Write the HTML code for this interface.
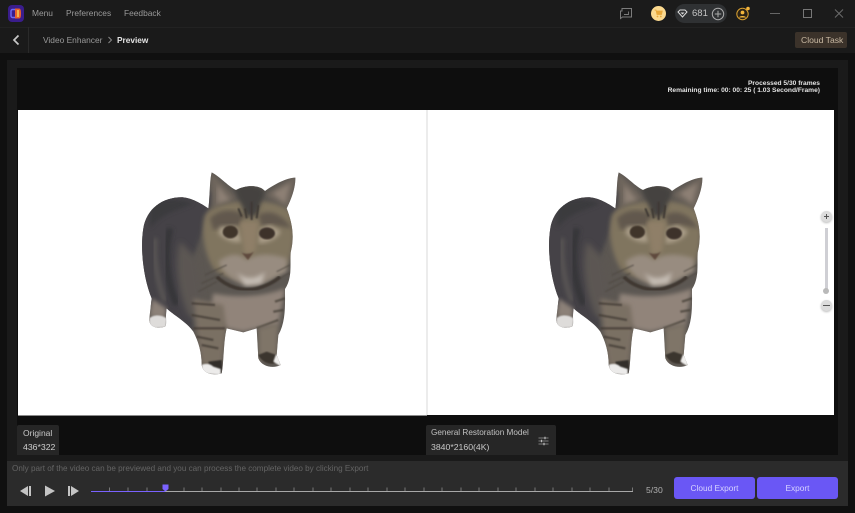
<!DOCTYPE html>
<html><head><meta charset="utf-8"><style>
*{box-sizing:border-box}
html,body{margin:0;padding:0;width:855px;height:513px;overflow:hidden;background:#101010;font-family:"Liberation Sans",sans-serif}
.a{position:absolute}
.t{position:absolute;white-space:nowrap;line-height:12px}
</style></head><body>
<svg width="0" height="0" style="position:absolute"><defs>
<filter id="b" x="-5%" y="-5%" width="110%" height="110%"><feGaussianBlur stdDeviation="2"/></filter>
<filter id="b2" x="-20%" y="-20%" width="140%" height="140%"><feGaussianBlur stdDeviation="9"/></filter>
<filter id="b3" x="-10%" y="-10%" width="120%" height="120%"><feGaussianBlur stdDeviation="6"/></filter>
<clipPath id="cc"><path d="M245,22C270,35 300,68 318,75C350,58 390,60 405,78C430,60 470,38 496,38C497,70 482,105 470,130C485,170 495,210 482,262C480,300 487,340 465,372C465,420 468,470 445,510L440,570L452,600C430,612 395,605 385,580L380,490L340,502L290,490C280,530 282,590 275,625C250,632 220,628 215,600C215,560 205,530 190,500C170,470 130,450 110,430C105,455 112,480 105,485C85,492 55,488 58,460L65,400C40,340 30,250 40,190C50,130 100,95 160,97C190,100 220,120 235,130C240,100 238,50 245,22Z"/></clipPath>
<symbol id="cat" viewBox="0 0 540 645" overflow="visible">
<g clip-path="url(#cc)">
<rect width="540" height="645" fill="#5c5752"/>
<path d="M20,80H250L225,180L180,300L190,500L110,450L20,400Z" fill="#444347" filter="url(#b3)"/>
<path d="M150,230C130,300 150,400 175,450L230,480L200,280Z" fill="#5c5752" filter="url(#b2)"/>
<path d="M75,220C70,290 85,360 105,410" stroke="#5a5755" stroke-width="14" fill="none" filter="url(#b3)"/>
<path d="M120,190C100,270 110,350 140,420" stroke="#363539" stroke-width="20" fill="none" filter="url(#b3)"/>
<path d="M60,110C90,100 150,100 190,115C150,135 100,140 60,190Z" fill="#3a3a3e" filter="url(#b3)"/>
<path d="M240,20L320,100L250,130Z" fill="#6f665d" filter="url(#b3)"/>
<path d="M405,90L500,30L480,135Z" fill="#6f665d" filter="url(#b3)"/>
<path d="M262,60L300,105L262,115Z" fill="#8d8075" filter="url(#b3)"/>
<path d="M428,85L480,55L465,115Z" fill="#8d8075" filter="url(#b3)"/>
<path d="M225,150C260,100 430,90 480,140C500,200 490,270 465,310C420,350 300,360 250,310C225,270 210,200 225,150Z" fill="#80745f" filter="url(#b3)"/>
<path d="M310,68C345,55 390,60 405,80L380,150L350,155L330,110Z" fill="#45423f" filter="url(#b3)"/>
<path d="M240,160C270,130 310,130 345,150L330,180L250,195ZM385,150C420,130 460,150 485,190L430,180L395,185Z" fill="#62584d" filter="url(#b3)"/>
<path d="M265,205C285,228 320,235 335,230L320,185L270,185ZM385,235C410,235 445,222 452,198L420,180L390,190Z" fill="#aa9e89" filter="url(#b3)"/>
<path d="M330,170L385,170L375,260L345,270Z" fill="#8f7f68" filter="url(#b3)"/>
<path d="M265,290C300,262 330,265 350,285C380,265 420,265 470,280L470,320C420,345 390,370 350,360C320,355 280,330 265,290Z" fill="#988c80" filter="url(#b3)"/>
<path d="M320,320C340,345 380,345 405,320L395,355L345,362Z" fill="#c4bcb3" filter="url(#b3)"/>
<path d="M260,335C290,365 340,380 375,372C405,365 435,350 450,335" stroke="#403931" stroke-width="11" fill="none" filter="url(#b)"/>
<path d="M250,385C320,400 400,395 465,370L445,480L380,490L340,500L290,490L240,440Z" fill="#91847a" filter="url(#b3)"/>
<path d="M190,400L280,420L290,490L275,600L215,600L205,530Z" fill="#7a6f64" filter="url(#b3)"/>
<path d="M185,415L255,420M185,450L270,465M190,490L285,490M200,515L250,525M215,540L265,550" stroke="#3f3933" stroke-width="7" fill="none" filter="url(#b)" opacity=".7"/>
<path d="M380,490L445,465M435,410L465,400M430,440L460,435" stroke="#433d36" stroke-width="7" fill="none" filter="url(#b)" opacity=".7"/>
<path d="M225,330L290,300M215,355L280,325M205,380L260,350M440,320L480,300M450,340L485,320" stroke="#4f4842" stroke-width="4" fill="none" filter="url(#b)" opacity=".7"/>
<path d="M345,130L350,160M365,110L365,165M385,120L380,160M325,130L335,155" stroke="#3c3733" stroke-width="6" fill="none" filter="url(#b)"/>
<path d="M385,490L445,475L440,590L385,585Z" fill="#7f7468" filter="url(#b3)"/>
<path d="M384,570C395,590 415,600 435,595L440,570L410,560Z" fill="#3b352f" filter="url(#b)"/>
<path d="M430,590L438,568L452,575L452,604Z" fill="#f0efed" filter="url(#b)"/>
<path d="M235,590L275,585L278,625L240,615Z" fill="#332e2a" filter="url(#b)"/>
<path d="M215,600C225,595 240,595 250,605L272,612L272,630L218,625Z" fill="#ecebea" filter="url(#b)"/>
<path d="M65,400L110,430L105,460L60,455Z" fill="#8c8178" filter="url(#b3)"/>
<path d="M58,460C70,448 95,448 110,460L108,487L58,490Z" fill="#dedcda" filter="url(#b)"/>
</g>
<ellipse cx="301" cy="201" rx="23" ry="19" fill="#40362b" filter="url(#b)"/>
<ellipse cx="411" cy="205" rx="24" ry="18" fill="#3d312a" filter="url(#b)"/>
<path d="M334,262C345,268 362,268 372,260L354,285Z" fill="#5f4a3e" filter="url(#b)"/>
</symbol>
</defs></svg>

<!-- top bars -->
<div class="a" style="left:0;top:0;width:855px;height:27px;background:#1b1b1b"></div>
<div class="a" style="left:0;top:27px;width:855px;height:26px;background:#1a1a1a;border-top:1px solid #222"></div>
<div class="a" style="left:28px;top:27px;width:1px;height:26px;background:#2a2a2a"></div>

<!-- logo -->
<svg class="a" style="left:8px;top:5px" width="16" height="17" viewBox="0 0 16 17">
<rect width="16" height="17" rx="4" fill="#3a1d8c"/>
<rect x="3" y="4.5" width="7" height="8" rx="1.5" fill="none" stroke="#6d6cf5" stroke-width="1.4"/>
<path d="M7,3.5H11C12.5,3.5 13,5 13,8.5C13,12 12.5,13.5 11,13.5H7Z" fill="#e8602c"/>
<rect x="9" y="5" width="2" height="7" fill="#f2b34a"/>
</svg>
<div class="t" style="left:32px;top:7px;font-size:8.4px;color:#9a9a9a">Menu</div>
<div class="t" style="left:66px;top:7px;font-size:8.4px;color:#9a9a9a">Preferences</div>
<div class="t" style="left:124px;top:7px;font-size:8.4px;color:#9a9a9a">Feedback</div>

<svg class="a" style="left:11px;top:33px" width="10" height="14" viewBox="0 0 10 14"><path d="M7.5,2.5L3,7L7.5,11.5" fill="none" stroke="#c8c8c8" stroke-width="1.7"/></svg>
<div class="t" style="left:43px;top:34px;font-size:8.4px;color:#9a9a9a">Video Enhancer</div>
<svg class="a" style="left:107px;top:36px" width="6" height="8" viewBox="0 0 6 8"><path d="M1.5,1L4.5,4L1.5,7" fill="none" stroke="#8a8a8a" stroke-width="1"/></svg>
<div class="t" style="left:117px;top:34px;font-size:8.3px;font-weight:bold;color:#e4e4e4">Preview</div>

<!-- top right icons -->
<svg class="a" style="left:619px;top:7px" width="14" height="13" viewBox="0 0 14 13"><path d="M3,1.5H12.5V10H3.5L1.5,11.5V4H3Z" fill="none" stroke="#7c7c7c" stroke-width="1"/><path d="M5,7.5H9.5V4.5" stroke="#7c7c7c" stroke-width=".9" fill="none"/></svg>
<div class="a" style="left:651px;top:6px;width:15px;height:15px;border-radius:50%;background:#fbd98f"></div>
<svg class="a" style="left:654px;top:9px" width="9" height="9" viewBox="0 0 9 9"><path d="M.5,1H2L3,5.5H7.5L8.3,2H2.5" fill="#e8a83a" stroke="#e8a83a" stroke-width=".8"/><circle cx="3.5" cy="7.5" r=".9" fill="#e8a83a"/><circle cx="6.8" cy="7.5" r=".9" fill="#e8a83a"/></svg>
<div class="a" style="left:675px;top:4px;width:52px;height:19px;border-radius:10px;background:#2f3133"></div>
<svg class="a" style="left:677px;top:9px" width="11" height="9" viewBox="0 0 11 9"><path d="M1,3L3,1H8L10,3L5.5,8Z" fill="none" stroke="#ddd" stroke-width="1"/><path d="M3.5,3.5H7.5L5.5,5.5Z" fill="#ddd"/></svg>
<div class="t" style="left:692px;top:8px;font-size:9.5px;color:#c4c4c4">681</div>
<svg class="a" style="left:711px;top:7px" width="14" height="14" viewBox="0 0 14 14"><circle cx="7" cy="7" r="5.7" fill="none" stroke="#aaa" stroke-width="1"/><path d="M7,3.8V10.2M3.8,7H10.2" stroke="#aaa" stroke-width="1"/></svg>
<svg class="a" style="left:735px;top:6px" width="16" height="15" viewBox="0 0 16 15"><circle cx="7.5" cy="8" r="5.7" fill="#2a2216" stroke="#d9a030" stroke-width="1"/><circle cx="7.5" cy="6.5" r="1.9" fill="#f2b63c"/><path d="M4,11.5C4.5,9.5 10.5,9.5 11,11.5Z" fill="#f2b63c"/><circle cx="13" cy="2.5" r="1.8" fill="#f5b53c"/></svg>
<div class="a" style="left:770px;top:13px;width:10px;height:1px;background:#666"></div>
<div class="a" style="left:803px;top:9px;width:9px;height:9px;border:1px solid #777"></div>
<svg class="a" style="left:834px;top:8px" width="10" height="11" viewBox="0 0 10 11"><path d="M1,1.5L9,9.5M9,1.5L1,9.5" stroke="#6c6c6c" stroke-width="1" fill="none"/></svg>

<div class="a" style="left:795px;top:32px;width:52px;height:16px;background:#3b322a;border-radius:2px"></div>
<div class="t" style="left:801px;top:34px;font-size:8.6px;color:#c9b9a3">Cloud Task</div>

<!-- main panel -->
<div class="a" style="left:0;top:53px;width:855px;height:460px;background:#101010"></div>
<div class="a" style="left:7px;top:60px;width:841px;height:402px;background:#1a1a1a"></div>
<div class="a" style="left:17px;top:68px;width:821px;height:387px;background:#0e0e0e"></div>
<div class="t" style="right:35px;top:79.5px;font-size:6.65px;line-height:7px;color:#e2e2e2;text-align:right;font-weight:bold">Processed 5/30 frames<br>Remaining time: 00: 00: 25 ( 1.03 Second/Frame)</div>

<!-- images -->
<div class="a" style="left:18px;top:110px;width:816px;height:305px;background:#fff"></div>
<div class="a" style="left:426px;top:110px;width:2px;height:305px;background:#ececec"></div>
<div class="a" style="left:18px;top:415px;width:409px;height:1px;background:#8a8a8a"></div>
<svg class="a" style="left:130px;top:165px" width="180" height="215" viewBox="0 0 540 645"><use href="#cat" width="540" height="645"/></svg>
<svg class="a" style="left:537px;top:165px" width="180" height="215" viewBox="0 0 540 645"><use href="#cat" width="540" height="645"/></svg>

<!-- zoom slider -->
<div class="a" style="left:821px;top:211px;width:11px;height:11px;border-radius:50%;background:#dcdcdc;box-shadow:0 1px 2px #bbb"></div>
<svg class="a" style="left:821px;top:211px" width="11" height="11" viewBox="0 0 11 11"><path d="M5.5,3V8M3,5.5H8" stroke="#555" stroke-width="1"/></svg>
<div class="a" style="left:825px;top:228px;width:3px;height:63px;background:#cfcfd4"></div>
<div class="a" style="left:823px;top:288px;width:6px;height:6px;border-radius:50%;background:#b9b9b9"></div>
<div class="a" style="left:821px;top:300px;width:11px;height:11px;border-radius:50%;background:#dcdcdc;box-shadow:0 1px 2px #bbb"></div>
<div class="a" style="left:823px;top:305px;width:7px;height:1px;background:#555"></div>

<!-- labels -->
<div class="a" style="left:17px;top:425px;width:42px;height:30px;background:#262626;border-radius:2px 2px 0 0"></div>
<div class="t" style="left:23px;top:427px;font-size:8.5px;color:#c8c8c8">Original</div>
<div class="t" style="left:23px;top:441px;font-size:8.7px;color:#d0d0d0">436*322</div>
<div class="a" style="left:426px;top:425px;width:130px;height:30px;background:#262626;border-radius:2px 2px 0 0"></div>
<div class="t" style="left:431px;top:427px;font-size:8.2px;color:#c0c0c0">General Restoration Model</div>
<div class="t" style="left:431px;top:441px;font-size:8.7px;color:#c8c8c8">3840*2160(4K)</div>
<svg class="a" style="left:538px;top:436px" width="11" height="10" viewBox="0 0 11 10"><path d="M.5,2H10.5M.5,5H10.5M.5,8H10.5" stroke="#999" stroke-width=".8"/><path d="M7,.8V3.2M3.5,3.8V6.2M6,6.8V9.2" stroke="#bbb" stroke-width="1.2"/></svg>

<!-- bottom bar -->
<div class="a" style="left:7px;top:461px;width:841px;height:45px;background:#2b2b2b"></div>
<div class="t" style="left:12px;top:463px;font-size:8.15px;color:#646464">Only part of the video can be previewed and you can process the complete video by clicking Export</div>
<svg class="a" style="left:18px;top:484px" width="64" height="14" viewBox="0 0 64 14">
<path d="M2,7L10,2V12Z" fill="#c4c4c4"/><rect x="11" y="2" width="2" height="10" fill="#c4c4c4"/>
<path d="M27,1.5L37,7L27,12.5Z" fill="#c4c4c4"/>
<rect x="50" y="2" width="2" height="10" fill="#c4c4c4"/><path d="M53,2L61,7L53,12Z" fill="#c4c4c4"/>
</svg>
<!-- timeline -->
<div class="a" style="left:91px;top:490.5px;width:542px;height:1.5px;background:#a8a8a8"></div>
<div class="a" style="left:91px;top:490.5px;width:74px;height:1.5px;background:#7a62ff"></div>
<svg class="a" style="left:91px;top:484px" width="543" height="8" viewBox="0 0 543 8"><path d="M18.5,3.5V7M37,3.5V7M56,3.5V7M74,3.5V7M93,3.5V7M111,3.5V7M130,3.5V7M148,3.5V7M166,3.5V7M185,3.5V7M203,3.5V7M222,3.5V7M240,3.5V7M259,3.5V7M277,3.5V7M296,3.5V7M314,3.5V7M333,3.5V7M351,3.5V7M370,3.5V7M388,3.5V7M407,3.5V7M425,3.5V7M444,3.5V7M462,3.5V7M481,3.5V7M499,3.5V7M518,3.5V7M541.5,3.5V7" stroke="#777" stroke-width="1" fill="none"/></svg>
<svg class="a" style="left:162px;top:484px" width="7" height="8" viewBox="0 0 7 8"><path d="M.5,.5H6.5V5L3.5,7.5L.5,5Z" fill="#7a62ff"/></svg>
<div class="t" style="left:646px;top:484px;font-size:8.6px;color:#b0b0b0">5/30</div>
<div class="a" style="left:674px;top:477px;width:81px;height:22px;background:#6a57f5;border-radius:3px"></div>
<div class="t" style="left:674px;top:482px;width:81px;text-align:center;font-size:8.3px;color:#d8d4ff">Cloud Export</div>
<div class="a" style="left:757px;top:477px;width:81px;height:22px;background:#6a57f5;border-radius:3px"></div>
<div class="t" style="left:757px;top:482px;width:81px;text-align:center;font-size:8.3px;color:#d8d4ff">Export</div>
</body></html>
